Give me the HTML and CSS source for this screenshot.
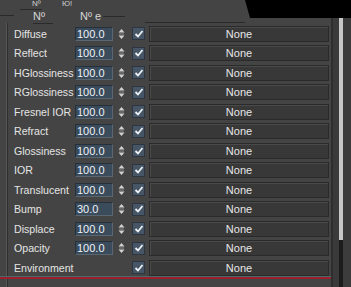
FILE: index.html
```html
<!DOCTYPE html>
<html>
<head>
<meta charset="utf-8">
<link rel="stylesheet" href="styles.css">
</head>
<body>
<div class="screen">
  <div class="main">
    <div class="header">
      <span class="h-top h-top1">Nº</span>
      <span class="h-top h-top2">Ю!</span>
      <span class="h-line h-l1"></span>
      <span class="h-line h-l2"></span>
      <span class="h-line h-l3"></span>
      <span class="h-line h-l4"></span>
      <span class="h-line h-l5"></span>
      <span class="h-col h-c1">Nº</span>
      <span class="h-col h-c2">Nº e</span>
      <div class="blackout"></div>
    </div>
    <div class="panel">
      <div class="rows" id="rows"></div>
      <div class="redline"></div>
    </div>
  </div>
  <div class="scroll">
    <div class="track-a"></div>
    <div class="track-b"><div class="thumb"></div><div class="lower"></div></div>
    <div class="track-c"></div>
  </div>
</div>
<script src="app.js"></script>
</body>
</html>
```

FILE: styles.css
```css
html, body {
  margin: 0;
  padding: 0;
  background: #444444;
  width: 351px;
  height: 287px;
  overflow: hidden;
  font-family: "Liberation Sans", Arial, sans-serif;
  font-size: 11px;
  color: #e2e2e2;
}
.screen {
  display: flex;
  width: 351px;
  height: 287px;
}
.main {
  flex: 1;
  display: flex;
  flex-direction: column;
  position: relative;
}
.header {
  height: 23px;
  position: relative;
  flex: none;
}
.h-top {
  position: absolute;
  top: 0;
  font-size: 8px;
  line-height: 8px;
  color: #cfcfcf;
}
.h-top1 { left: 32px; }
.h-top2 { left: 62px; }
.h-line {
  position: absolute;
  height: 1px;
  background: #2a2a2a;
}
.h-l1 { left: 20px; top: 9px; width: 22px; }
.h-l2 { left: 0; top: 15px; width: 14px; }
.h-l3 { left: 33px; top: 23px; width: 20px; }
.h-l4 { left: 103px; top: 16px; width: 22px; }
.h-l5 { left: 145px; top: 22px; width: 100px; }
.h-col {
  position: absolute;
  top: 10px;
  color: #d8d8d8;
}
.h-c1 { left: 33px; }
.h-c2 { left: 80px; }
.blackout {
  position: absolute;
  left: 245px;
  top: 0;
  width: 110px;
  height: 18px;
  background: #000;
  clip-path: polygon(0 0, 100% 0, 100% 100%, 5px 100%);
}
.panel {
  flex: 1;
  position: relative;
  margin-left: 7px;
  border-left: 1px solid #2f2f2f;
  box-shadow: -1px 0 0 #555;
}
.rows {
  display: grid;
  grid-auto-rows: 19.5px;
  padding-top: 1px;
  padding-left: 6px;
}
.row {
  display: flex;
  align-items: center;
}
.label {
  width: 61px;
  flex: none;
  white-space: nowrap;
  color: #e4e4e4;
  font-size: 10.6px;
}
.spin {
  width: 35px;
  height: 12px;
  flex: none;
  background: #3a4b5c;
  border: 1px solid #26303a;
  border-right-color: #5a6672;
  border-bottom-color: #5a6672;
  color: #eef2f6;
  line-height: 12px;
  padding-left: 1px;
  font-size: 11px;
}
.arrows {
  width: 9px;
  height: 14px;
  margin-left: 4px;
  flex: none;
}
.arrows.blank { visibility: hidden; }
.check {
  width: 11px;
  height: 11px;
  margin-left: 6px;
  flex: none;
  background: #465666;
  border: 1px solid #2c3540;
  display: flex;
  align-items: center;
  justify-content: center;
}
.none {
  margin-left: 4px;
  width: 178px;
  height: 14px;
  flex: none;
  background: #383838;
  border: 1px solid #2a2a2a;
  box-shadow: inset 1px 1px 0 #4a4a4a;
  text-align: center;
  line-height: 14px;
  color: #e6e6e6;
}
.redline {
  position: absolute;
  left: -8px;
  right: 0;
  top: 254px;
  height: 2px;
  background: #9c1f2e;
  box-shadow: 0 -1px 0 #4a6a6a;
}
.scroll {
  width: 20px;
  flex: none;
  display: flex;
  margin-top: 18px;
}
.track-a {
  width: 6px;
  background: #3a3a3a;
  border-left: 2px solid #2e2e2e;
}
.track-b {
  width: 4px;
  display: flex;
  flex-direction: column;
}
.thumb {
  height: 222px;
  background: #c8c8c8;
}
.lower {
  flex: 1;
  background: #1c1c1c;
}
.track-c {
  flex: 1;
  background: #3c3c3c;
}
```

FILE: app.js
```js
const rows = [
  ["Diffuse", "100.0"], ["Reflect", "100.0"], ["HGlossiness", "100.0"],
  ["RGlossiness", "100.0"], ["Fresnel IOR", "100.0"], ["Refract", "100.0"],
  ["Glossiness", "100.0"], ["IOR", "100.0"], ["Translucent", "100.0"],
  ["Bump", "30.0"], ["Displace", "100.0"], ["Opacity", "100.0"],
  ["Environment", null]
];
const arrowSvg = '<svg width="9" height="14" viewBox="0 0 9 14"><path d="M1.5 5.5 L4.5 2 L7.5 5.5 Z" fill="#d2d2d2"/><rect x="2" y="6.5" width="5" height="1" fill="#8a8a8a"/><path d="M1.5 8.5 L4.5 12 L7.5 8.5 Z" fill="#d2d2d2"/></svg>';
const checkSvg = '<svg width="10" height="10" viewBox="0 0 10 10"><path d="M1.5 5 L4 7.5 L8.5 2" stroke="#eef2f6" stroke-width="1.8" fill="none"/></svg>';
const host = document.getElementById("rows");
rows.forEach(([label, val]) => {
  const r = document.createElement("div");
  r.className = "row";
  const spin = val === null
    ? '<div class="spin" style="visibility:hidden"></div><div class="arrows blank"></div>'
    : '<div class="spin">' + val + '</div><div class="arrows">' + arrowSvg + '</div>';
  r.innerHTML = '<div class="label">' + label + '</div>' + spin +
    '<div class="check">' + checkSvg + '</div><div class="none">None</div>';
  host.appendChild(r);
});
```
